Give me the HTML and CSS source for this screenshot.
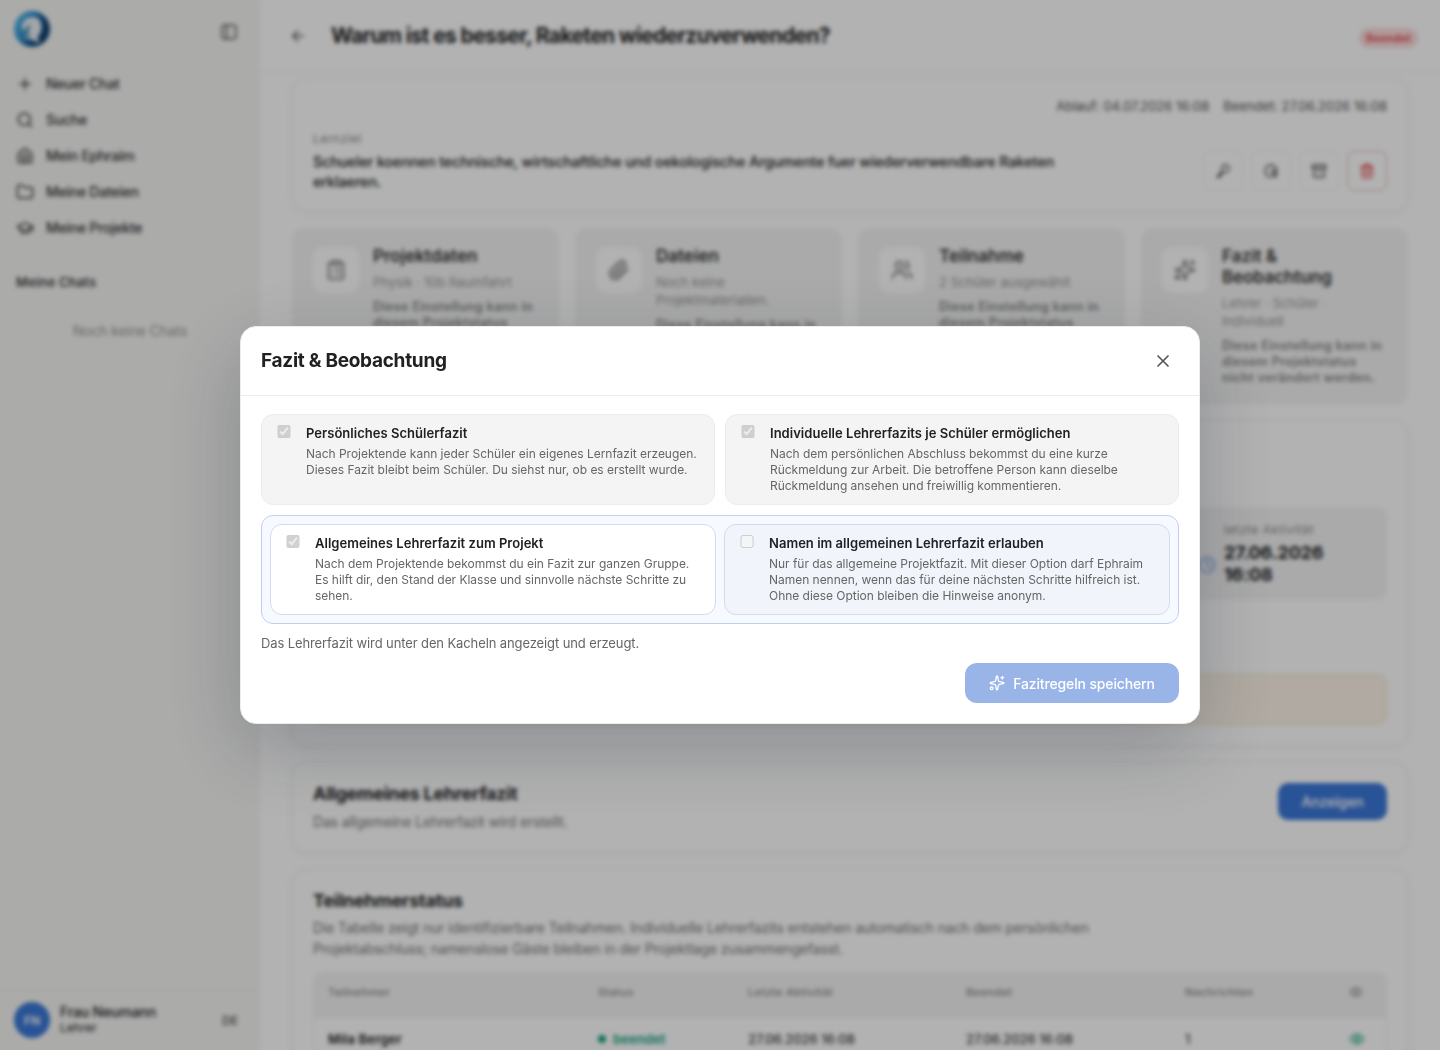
FILE: index.html
```html
<!DOCTYPE html>
<html lang="de">
<head>
<meta charset="utf-8">
<title>Fazit &amp; Beobachtung</title>
<link rel="stylesheet" href="styles.css">
</head>
<body>
<div class="app">
  <aside class="sidebar">
    <div class="brand">
      <svg class="logo" viewBox="0 0 36 36">
        <defs><linearGradient id="ring" x1="0" y1=".2" x2="1" y2=".7"><stop offset="0" stop-color="#5fbfee"/><stop offset=".4" stop-color="#2f90cc"/><stop offset=".65" stop-color="#16528c"/><stop offset="1" stop-color="#0d3a68"/></linearGradient></defs>
        <circle cx="18" cy="18" r="18" fill="url(#ring)"/>
        <path d="M8 15C9 9 14 6 19 6c7 0 10 7 8 14-1 3-2 5-4 6l3 6c-5-1-8-5-17-5 4-1 6-2 8-4-3-1-5 0-8 2 1-3 0-6-1-10z" fill="#e9eef2"/>
        <path d="M7 22c4-2 6-6 9-9 0 6-2 9-8 11z" fill="#2373ad"/>
      </svg>
      <svg class="icon" viewBox="0 0 24 24"><rect x="3" y="3" width="18" height="18" rx="2"/><path d="M9 3v18"/></svg>
    </div>
    <nav class="nav">
      <a class="nav-item"><svg class="icon" viewBox="0 0 24 24"><path d="M5 12h14M12 5v14"/></svg>Neuer Chat</a>
      <a class="nav-item"><svg class="icon" viewBox="0 0 24 24"><circle cx="11" cy="11" r="8"/><path d="m21 21-4.3-4.3"/></svg>Suche</a>
      <a class="nav-item"><svg class="icon" viewBox="0 0 24 24"><path d="M3 10a2 2 0 0 1 .7-1.5l7-6a2 2 0 0 1 2.6 0l7 6A2 2 0 0 1 21 10v9a2 2 0 0 1-2 2H5a2 2 0 0 1-2-2z"/><path d="M8 17v-3a4 4 0 0 1 8 0v3M8 17h8"/></svg>Mein Ephraim</a>
      <a class="nav-item"><svg class="icon" viewBox="0 0 24 24"><path d="M20 20a2 2 0 0 0 2-2V8a2 2 0 0 0-2-2h-7.900a2 2 0 0 1-1.700-.9L9.600 3.900A2 2 0 0 0 7.900 3H4a2 2 0 0 0-2 2v13a2 2 0 0 0 2 2Z"/></svg>Meine Dateien</a>
      <a class="nav-item"><svg class="icon" viewBox="0 0 24 24"><path d="M21.400 10.900a1 1 0 0 0 0-1.800l-8.600-3.900a2 2 0 0 0-1.600 0L2.600 9.100a1 1 0 0 0 0 1.800l8.600 3.900a2 2 0 0 0 1.600 0z"/><path d="M22 10v6M6 12.500V16a6 3 0 0 0 12 0v-3.500"/></svg>Meine Projekte</a>
    </nav>
    <h2 class="side-heading">Meine Chats</h2>
    <p class="side-empty">Noch keine Chats</p>
    <div class="user">
      <span class="avatar">FN</span>
      <div class="user-text"><strong>Frau Neumann</strong><span>Lehrer</span></div>
      <span class="lang">DE</span>
    </div>
  </aside>

  <div class="main">
    <header class="topbar">
      <svg class="icon" viewBox="0 0 24 24"><path d="m12 19-7-7 7-7M19 12H5"/></svg>
      <h1>Warum ist es besser, Raketen wiederzuverwenden?</h1>
      <span class="badge">Beendet</span>
    </header>
    <div class="content">
      <section class="card goal-card">
        <div class="meta"><span>Ablauf: 04.07.2026 16:08</span><span>Beendet: 27.06.2026 16:08</span></div>
        <div class="goal-row">
          <div class="goal"><span class="goal-label">Lernziel</span><p>Schueler koennen technische, wirtschaftliche und oekologische Argumente fuer wiederverwendbare Raketen erklaeren.</p></div>
          <div class="actions">
            <span class="action"><svg class="icon" viewBox="0 0 24 24"><circle cx="15.500" cy="8.500" r="5.500"/><path d="M11.500 12.500 3 21M3 21h4v-3h3v-4"/></svg></span>
            <span class="action"><svg class="icon" viewBox="0 0 24 24"><path d="M21 12a9 9 0 1 0-9 9M12 12h9M13 13l7 7M20 14v6h-6"/></svg></span>
            <span class="action"><svg class="icon" viewBox="0 0 24 24"><rect x="2" y="3" width="20" height="5" rx="1"/><path d="M4 8v11a2 2 0 0 0 2 2h12a2 2 0 0 0 2-2V8M10 12h4"/></svg></span>
            <span class="action danger"><svg class="icon" viewBox="0 0 24 24"><path d="M3 6h18M19 6v14a2 2 0 0 1-2 2H7a2 2 0 0 1-2-2V6M8 6V4a2 2 0 0 1 2-2h4a2 2 0 0 1 2 2v2M10 11v6M14 11v6"/></svg></span>
          </div>
        </div>
      </section>

      <div class="tiles">
        <section class="tile">
          <span class="tile-icon"><svg class="icon" viewBox="0 0 24 24"><rect x="8" y="2" width="8" height="4" rx="1"/><path d="M16 4h2a2 2 0 0 1 2 2v14a2 2 0 0 1-2 2H6a2 2 0 0 1-2-2V6a2 2 0 0 1 2-2h2M12 11h4M12 16h4M8 11h.01M8 16h.01"/></svg></span>
          <div><h3>Projektdaten</h3><p>Physik · 10b Raumfahrt</p><b>Diese Einstellung kann in diesem Projektstatus nicht verändert werden.</b></div>
        </section>
        <section class="tile">
          <span class="tile-icon"><svg class="icon" viewBox="0 0 24 24"><path d="m21.400 11-9.200 9.200a6 6 0 0 1-8.500-8.500l8.600-8.600a4 4 0 1 1 5.700 5.700l-8.600 8.600a2 2 0 0 1-2.800-2.800l8.500-8.500"/></svg></span>
          <div><h3>Dateien</h3><p>Noch keine Projektmaterialien.</p><b>Diese Einstellung kann in diesem Projektstatus nicht verändert werden.</b></div>
        </section>
        <section class="tile">
          <span class="tile-icon"><svg class="icon" viewBox="0 0 24 24"><path d="M16 21v-2a4 4 0 0 0-4-4H6a4 4 0 0 0-4 4v2"/><circle cx="9" cy="7" r="4"/><path d="M22 21v-2a4 4 0 0 0-3-3.900M16 3.100a4 4 0 0 1 0 7.800"/></svg></span>
          <div><h3>Teilnahme</h3><p>2 Schüler ausgewählt</p><b>Diese Einstellung kann in diesem Projektstatus nicht verändert werden.</b></div>
        </section>
        <section class="tile">
          <span class="tile-icon"><svg class="icon" viewBox="0 0 24 24"><path d="M11 2.800a1 1 0 0 1 2 0l1.100 5.600a2 2 0 0 0 1.500 1.500l5.600 1.100a1 1 0 0 1 0 2l-5.600 1.100a2 2 0 0 0-1.500 1.500L13 21.200a1 1 0 0 1-2 0l-1.100-5.600a2 2 0 0 0-1.500-1.500L2.800 13a1 1 0 0 1 0-2l5.600-1.100a2 2 0 0 0 1.500-1.500z"/><path d="M20 2v4M22 4h-4"/><circle cx="4" cy="20" r="2"/></svg></span>
          <div><h3>Fazit &amp; Beobachtung</h3><p>Lehrer · Schüler · Individuell</p><b>Diese Einstellung kann in diesem Projektstatus nicht verändert werden.</b></div>
        </section>
      </div>

      <section class="card status-card">
        <div class="stat">
          <svg class="icon" viewBox="0 0 24 24"><circle cx="12" cy="12" r="10"/><path d="M12 6v6l4 2"/></svg>
          <div><span>letzte Aktivität</span><strong>27.06.2026 16:08</strong></div>
        </div>
        <div class="notice"></div>
      </section>

      <section class="card summary-card">
        <div><h2>Allgemeines Lehrerfazit</h2><p>Das allgemeine Lehrerfazit wird erstellt.</p></div>
        <button class="show">Anzeigen</button>
      </section>

      <section class="card table-card">
        <h2>Teilnehmerstatus</h2>
        <p>Die Tabelle zeigt nur identifizierbare Teilnahmen. Individuelle Lehrerfazits entstehen automatisch nach dem persönlichen Projektabschluss; namenslose Gäste bleiben in der Projektlage zusammengefasst.</p>
        <div class="table">
          <div class="row head"><span>Teilnehmer</span><span>Status</span><span>Letzte Aktivität</span><span>Beendet</span><span>Nachrichten</span><svg class="icon" viewBox="0 0 24 24"><path d="M2 12s3.500-7 10-7 10 7 10 7-3.500 7-10 7-10-7-10-7"/><circle cx="12" cy="12" r="3"/></svg></div>
          <div class="row"><strong>Mila Berger</strong><span class="done">beendet</span><span>27.06.2026 16:08</span><span>27.06.2026 16:08</span><span>1</span><svg class="icon green" viewBox="0 0 24 24"><path d="M2 12s3.500-7 10-7 10 7 10 7-3.500 7-10 7-10-7-10-7"/><circle cx="12" cy="12" r="3"/></svg></div>
        </div>
      </section>
    </div>
  </div>
</div>

<div class="overlay">
  <div class="modal" role="dialog">
    <header class="modal-head">
      <h2>Fazit &amp; Beobachtung</h2>
      <button class="close" aria-label="Schließen"><svg class="icon" viewBox="0 0 24 24"><path d="M18 6 6 18M6 6l12 12"/></svg></button>
    </header>
    <div class="modal-body">
      <div class="options">
        <label class="option"><input type="checkbox" checked disabled><span><strong>Persönliches Schülerfazit</strong><small>Nach Projektende kann jeder Schüler ein eigenes Lernfazit erzeugen. Dieses Fazit bleibt beim Schüler. Du siehst nur, ob es erstellt wurde.</small></span></label>
        <label class="option"><input type="checkbox" checked disabled><span><strong>Individuelle Lehrerfazits je Schüler ermöglichen</strong><small>Nach dem persönlichen Abschluss bekommst du eine kurze Rückmeldung zur Arbeit. Die betroffene Person kann dieselbe Rückmeldung ansehen und freiwillig kommentieren.</small></span></label>
      </div>
      <div class="options group">
        <label class="option active"><input type="checkbox" checked disabled><span><strong>Allgemeines Lehrerfazit zum Projekt</strong><small>Nach dem Projektende bekommst du ein Fazit zur ganzen Gruppe. Es hilft dir, den Stand der Klasse und sinnvolle nächste Schritte zu sehen.</small></span></label>
        <label class="option sub"><input type="checkbox" disabled><span><strong>Namen im allgemeinen Lehrerfazit erlauben</strong><small>Nur für das allgemeine Projektfazit. Mit dieser Option darf Ephraim Namen nennen, wenn das für deine nächsten Schritte hilfreich ist. Ohne diese Option bleiben die Hinweise anonym.</small></span></label>
      </div>
      <p class="note">Das Lehrerfazit wird unter den Kacheln angezeigt und erzeugt.</p>
      <button class="save"><svg class="icon" viewBox="0 0 24 24"><path d="M11 2.800a1 1 0 0 1 2 0l1.100 5.600a2 2 0 0 0 1.500 1.500l5.600 1.100a1 1 0 0 1 0 2l-5.600 1.100a2 2 0 0 0-1.500 1.500L13 21.200a1 1 0 0 1-2 0l-1.100-5.600a2 2 0 0 0-1.500-1.500L2.800 13a1 1 0 0 1 0-2l5.600-1.100a2 2 0 0 0 1.500-1.500z"/><path d="M20 2v4M22 4h-4"/><circle cx="4" cy="20" r="2"/></svg>Fazitregeln speichern</button>
    </div>
  </div>
</div>
</body>
</html>
```

FILE: styles.css
```css
* { box-sizing: border-box; }
body { margin: 0; font-family: Inter, "Liberation Sans", sans-serif; color: #202123; background: #fff; overflow: hidden; }
h1, h2, h3, p { margin: 0; }
button { font-family: inherit; border: 0; padding: 0; }
.icon { width: 18px; height: 18px; flex: none; fill: none; stroke: currentColor; stroke-width: 2; stroke-linecap: round; stroke-linejoin: round; }

.app { display: flex; height: 1050px; overflow: hidden; }

.sidebar { width: 260px; flex: none; display: flex; flex-direction: column; background: #f5f5f3; }
.brand { display: flex; justify-content: space-between; align-items: center; height: 36px; margin: 11px 22px 19px 14px; color: #555; }
.brand .icon { position: relative; top: 3px; }
.logo { width: 36px; height: 36px; }
.nav { display: flex; flex-direction: column; }
.nav-item { display: flex; align-items: center; gap: 12px; height: 36px; padding: 0 0 1px 16px; font-size: 14px; font-weight: 500; letter-spacing: -.26px; color: #333; }
.side-heading { margin: 28px 0 0 16px; font-size: 13px; line-height: 16px; font-weight: 600; letter-spacing: .15px; color: #444; }
.side-empty { margin-top: 31px; text-align: center; font-size: 14px; line-height: 20px; letter-spacing: -.18px; color: #999; }
.user { display: flex; align-items: center; gap: 10px; height: 61px; margin-top: auto; padding: 0 22px 0 14px; border-top: 1px solid #ebebe9; }
.avatar { width: 36px; height: 36px; border-radius: 50%; background: #3c78d8; color: #fff; display: flex; align-items: center; justify-content: center; font-size: 12px; font-weight: 600; }
.user-text { display: flex; flex-direction: column; flex: 1; padding-bottom: 2px; font-size: 12px; line-height: 15px; }
.user-text strong { font-size: 14px; line-height: 17px; font-weight: 500; letter-spacing: -.15px; }
.lang { font-size: 12px; font-weight: 500; color: #555; }

.main { flex: 1; min-width: 0; display: flex; flex-direction: column; }
.topbar { height: 72px; flex: none; display: flex; align-items: center; padding: 0 22px 0 29px; border-bottom: 1px solid #eee; }
.topbar .icon { color: #555; }
.topbar h1 { margin-left: 24px; font-size: 21px; line-height: 28px; font-weight: 700; letter-spacing: -.64px; }
.badge { margin-left: auto; position: relative; top: 2px; padding: 3px 7px; border-radius: 10px; background: #fbdcdc; color: #e5484d; font-size: 11px; line-height: 14px; font-weight: 600; letter-spacing: .1px; }
.content { display: flex; flex-direction: column; gap: 16px; padding: 6px 32px 0; }
.card { flex: none; padding: 20px; border: 1px solid #eee; border-radius: 14px; background: #fff; box-shadow: 0 1px 8px rgba(0,0,0,.04); }
.goal-card { height: 134px; padding-top: 19px; }
.meta { display: flex; justify-content: flex-end; gap: 14px; font-size: 13px; line-height: 16px; letter-spacing: -.02px; color: #555; }
.goal-row { display: flex; justify-content: space-between; align-items: flex-end; margin-top: 17px; }
.goal { width: 780px; }
.goal-label { display: block; font-size: 12px; line-height: 16px; letter-spacing: .45px; color: #888; }
.goal p { padding-top: 5px; margin-bottom: -1px; font-size: 14.5px; line-height: 20px; font-weight: 500; letter-spacing: -.16px; }
.actions { display: flex; gap: 8px; }
.action { width: 40px; height: 40px; display: flex; align-items: center; justify-content: center; border: 1px solid #f6f6f6; border-radius: 8px; color: #444; }
.action .icon { width: 16px; height: 16px; }
.danger { color: #dc2626; border-color: #f2b5b5; }

.tiles { display: grid; grid-template-columns: repeat(4, 1fr); gap: 16px; height: 176px; }
.tile { display: flex; align-items: flex-start; gap: 14px; padding: 18px 20px; border: 1px solid #f4f4f4; border-radius: 12px; background: #f4f4f4; }
.tile-icon { width: 46px; height: 46px; flex: none; display: flex; align-items: center; justify-content: center; border-radius: 10px; background: #fff; color: #777; }
.tile-icon .icon { width: 22px; height: 22px; }
.tile h3 { margin-top: -1px; font-size: 17px; line-height: 21px; font-weight: 600; color: #333; }
.tile p { margin: 6px 0 8px; font-size: 13px; line-height: 18px; letter-spacing: -.05px; color: #999; }
.tile b { display: block; font-size: 12.5px; line-height: 16px; font-weight: 600; letter-spacing: .38px; color: #888; }

.status-card { height: 326px; display: flex; flex-direction: column; padding-top: 86px; }
.stat { width: 205px; height: 94px; align-self: flex-end; display: flex; align-items: center; gap: 8px; padding: 0 16px; border-radius: 10px; background: #f4f4f4; }
.stat .icon { color: #6f9be0; margin-top: 22px; }
.stat span { display: block; font-size: 12px; line-height: 16px; letter-spacing: .6px; color: #888; margin-bottom: 4px; }
.stat strong { display: block; font-size: 18px; line-height: 22px; font-weight: 700; letter-spacing: -.15px; }
.notice { height: 51px; margin-top: 74px; border: 1px solid #f3e3c4; border-radius: 10px; background: #fcf4e8; }

.summary-card { height: 91px; display: flex; justify-content: space-between; align-items: flex-start; }
.card h2 { font-size: 18px; line-height: 22px; font-weight: 700; letter-spacing: -.25px; }
.card h2 + p { margin-top: 6px; font-size: 14px; line-height: 21px; letter-spacing: -.18px; color: #777; }
.show { width: 109px; height: 37px; border-radius: 10px; background: #3c78d8; color: #fff; font-size: 14px; font-weight: 500; letter-spacing: -.1px; }
.table-card { height: 220px; }
.card.table-card h2 + p { max-width: 800px; margin-top: 5px; }
.table { margin-top: 13px; border: 1px solid #f1f1f1; border-radius: 10px; overflow: hidden; }
.row { display: grid; grid-template-columns: 270px 150px 218px 219px 164px 16px; align-items: center; height: 42px; padding-left: 14px; font-size: 13px; font-weight: 500; letter-spacing: -.05px; color: #444; }
.head { height: 45px; padding-bottom: 7px; background: #f4f4f4; font-size: 11px; letter-spacing: .38px; color: #888; }
.row strong { font-weight: 600; letter-spacing: .2px; color: #202123; }
.row .icon { width: 16px; height: 16px; }
.head .icon { width: 14px; height: 14px; }
.row .green { color: #10a37f; }
.done { display: flex; align-items: center; gap: 7px; color: #10a37f; font-weight: 600; letter-spacing: .1px; }
.done::before { content: ""; width: 8px; height: 8px; border-radius: 50%; background: #10a37f; }

.overlay { position: fixed; inset: 0; display: flex; align-items: center; justify-content: center; background: rgba(0,0,0,.3); backdrop-filter: blur(2px); }
.modal { width: 960px; border: 1px solid #ececec; border-radius: 16px; background: #fff; box-shadow: 0 24px 80px rgba(15,23,42,.24); overflow: hidden; }
.modal-head { display: flex; align-items: center; justify-content: space-between; height: 69px; padding: 0 20px; border-bottom: 1px solid #ececec; }
.modal-head h2 { font-size: 19px; line-height: 24px; font-weight: 700; letter-spacing: -.28px; }
.close { width: 32px; height: 32px; display: flex; align-items: center; justify-content: center; background: none; color: #555; }
.close .icon { width: 20px; height: 20px; }
.modal-body { display: flex; flex-direction: column; gap: 10px; padding: 18px 20px 20px; }
.options { display: grid; grid-template-columns: 1fr 1fr; gap: 10px; }
.group { gap: 8px; padding: 8px; border: 1px solid #bfcfee; border-radius: 12px; background: #f6f9ff; }
.option { display: flex; align-items: flex-start; height: 91px; padding: 10px 15px; border: 1px solid #ececec; border-radius: 12px; background: #f4f4f4; }
.option input { width: 14px; height: 13px; flex: none; margin: 0 15px 0 0; }
.option strong { display: block; font-size: 13px; line-height: 17px; font-weight: 600; letter-spacing: .03px; margin-bottom: 4px; }
.option small { display: block; font-size: 12px; line-height: 16px; letter-spacing: -.03px; color: #666; }
.option.active { background: #fff; border-color: #d3dbee; }
.option.sub { background: #f2f4fc; border-color: #d3dbee; }
.note { font-size: 13px; line-height: 19px; letter-spacing: -.11px; color: #666; }
.save { align-self: flex-end; width: 214px; height: 40px; display: flex; align-items: center; justify-content: center; gap: 8px; border-radius: 12px; background: #99b5e8; color: #fff; font-size: 14px; font-weight: 500; letter-spacing: -.14px; }
.save .icon { width: 16px; height: 16px; }
```
